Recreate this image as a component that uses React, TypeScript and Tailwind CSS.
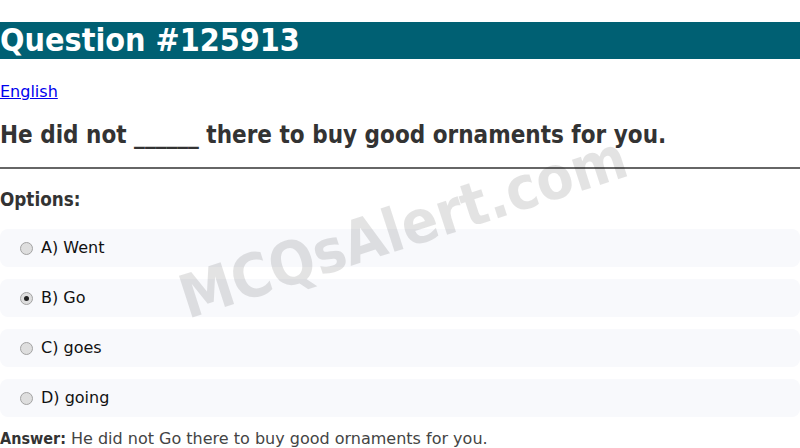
const options = [
  { label: "A) Went", checked: false },
  { label: "B) Go", checked: true },
  { label: "C) goes", checked: false },
  { label: "D) going", checked: false },
];

function Radio({ checked }: { checked: boolean }) {
  return (
    <span className="flex h-[13px] w-[13px] shrink-0 items-center justify-center rounded-full border border-[#a3a3a3] bg-[#dedede]">
      {checked && <span className="h-[5px] w-[5px] rounded-full bg-[#222]" />}
    </span>
  );
}

const bold = "font-['DejaVu_Sans_Condensed','DejaVu_Sans',sans-serif] font-bold";

export default function App() {
  return (
    <div className="relative min-h-[448px] overflow-hidden bg-white font-['DejaVu_Sans',sans-serif] text-[16px]">
      <h1 className={`mt-[22px] mb-[23px] bg-[#006073] text-[32px] leading-[37px] text-white ${bold}`}>
        Question #125913
      </h1>
      <p className="my-4 leading-[19px]">
        <a href="#" className="text-[#0000ee] underline">
          English
        </a>
      </p>
      <h2 className={`mt-[20px] mb-[18px] text-[24px] leading-[28px] text-[#333] ${bold}`}>
        He did not ______ there to buy good ornaments for you.
      </h2>
      <hr className="my-2 border-t-2 border-[#666]" />
      <h3 className={`mt-[20px] mb-[18px] text-[18.72px] leading-[22px] text-[#333] ${bold}`}>
        Options:
      </h3>
      <div className="flex flex-col gap-3">
        {options.map((o) => (
          <div
            key={o.label}
            className="flex h-[38px] items-center gap-2 rounded-lg bg-[#f8f9fc] pl-5 text-[#111]"
          >
            <Radio checked={o.checked} />
            <span>{o.label}</span>
          </div>
        ))}
      </div>
      <p className="mt-[12px] leading-[19px] text-[#444]">
        <span className={`text-[#333] ${bold}`}>Answer:</span> He did not Go there to buy good ornaments for you.
      </p>
      <div
        className={`pointer-events-none absolute left-[403px] top-[227px] -translate-x-1/2 -translate-y-1/2 -rotate-[18deg] whitespace-nowrap text-[60px] text-black/[0.11] ${bold}`}
      >
        MCQsAlert.com
      </div>
    </div>
  );
}
